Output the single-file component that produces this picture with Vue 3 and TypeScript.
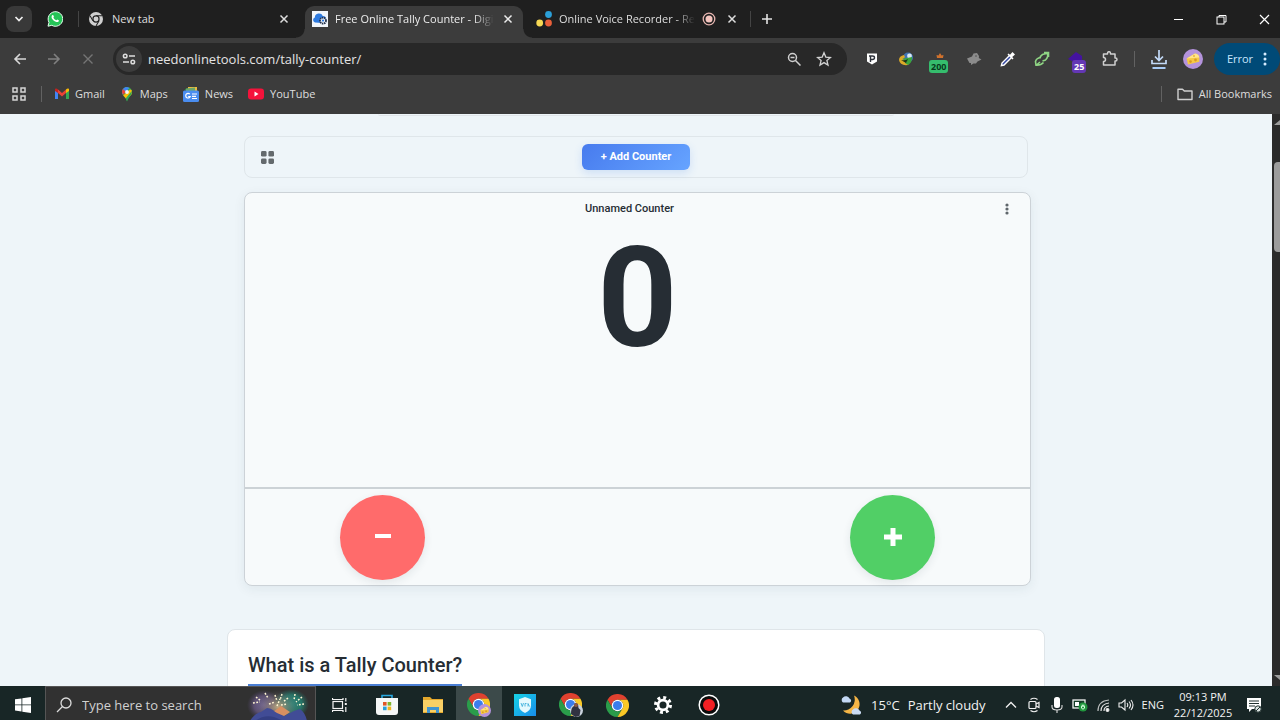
<script setup lang="ts">
import { ref } from 'vue'

const address = ref('needonlinetools.com/tally-counter/')
const search = ref('')
const count = ref(0)
</script>

<template>
  <svg class="defs" aria-hidden="true">
    <symbol id="chrome" viewBox="0 0 48 48">
      <path fill="#e0412f" d="M24 12H44.8A24 24 0 0 0 3.2 12L13.6 30A12 12 0 0 1 24 12Z" />
      <path fill="#2a9d4a" d="M13.6 30L3.2 12A24 24 0 0 0 24 48L34.4 30A12 12 0 0 1 13.6 30Z" />
      <path fill="#fbc926" d="M34.4 30L24 48A24 24 0 0 0 44.8 12H24A12 12 0 0 1 34.4 30Z" />
      <circle cx="24" cy="24" r="12" fill="#fff" />
      <circle cx="24" cy="24" r="9.5" fill="#3b7ded" />
    </symbol>
    <symbol id="cross" viewBox="0 0 16 16">
      <path d="M4 4l8 8M12 4l-8 8" fill="none" stroke="currentColor" stroke-width="1.7" />
    </symbol>
    <symbol id="cheese" viewBox="0 0 20 20">
      <circle cx="10" cy="10" r="10" fill="#b493dc" />
      <path d="M3.6 9.6L12 4.4c2.5.3 4 1.8 4.3 4.2v4.2L5 15.6z" fill="#f6c944" />
      <path d="M3.6 9.6L12 4.4c2.5.3 4 1.8 4.3 4.2z" fill="#ffe48a" />
      <circle cx="7.5" cy="12.6" r="1.3" fill="#d99a25" />
      <circle cx="12.5" cy="11" r="1.4" fill="#d99a25" />
      <circle cx="11" cy="7" r="1" fill="#e8b53a" />
    </symbol>
  </svg>

  <div class="desktop">
    <header class="tabs">
      <button class="tab-search" aria-label="Search tabs">
        <svg width="12" height="12" viewBox="0 0 12 12"><path d="M2.5 4l3.5 3.5L9.5 4" fill="none" stroke="#f0f0f0" stroke-width="1.7" /></svg>
      </button>
      <div class="tab pinned">
        <svg width="16" height="16" viewBox="0 0 16 16">
          <path d="M1 15.2l1-3.8A7.3 7.3 0 1 1 4.8 14.3z" fill="#25c457" stroke="#e8fff0" stroke-width="1" />
          <path d="M5.2 4.3c.5-.5 1-.4 1.2.1l.5 1.2c.1.4-.6.9-.5 1.2.6 1.2 1.5 2 2.7 2.5.4.1.9-.9 1.2-.8l1.4.7c.4.2.1 1.1-.3 1.5-1.9 1.5-7.5-2.3-6.8-5.2.1-.5.3-.9.6-1.2z" fill="#fff" />
        </svg>
      </div>
      <div class="tab first">
        <svg width="14" height="14" viewBox="0 0 48 48">
          <circle cx="24" cy="24" r="24" fill="#d0d0d0" />
          <path d="M24 12.5H45M13.5 30L3.5 12.5M34.5 30L24 48" stroke="#202020" stroke-width="3.5" />
          <circle cx="24" cy="24" r="12.5" fill="#202020" />
          <circle cx="24" cy="24" r="8.5" fill="#d0d0d0" />
        </svg>
        <span class="tab-title">New tab</span>
        <button class="close" aria-label="Close New tab"><svg width="14" height="14"><use href="#cross" /></svg></button>
      </div>
      <div class="tab active">
        <svg width="16" height="16" viewBox="0 0 16 16">
          <rect width="16" height="16" fill="#f2f6fb" />
          <path d="M3 11.5A2.7 2.7 0 0 1 2.8 6.4 4.2 4.2 0 0 1 10.8 5C13 5 14 6.3 14 7.8L10 12z" fill="#2e7be0" />
          <circle cx="11" cy="9.6" r="3" fill="#eaf1fa" stroke="#24324c" stroke-width="1.8" stroke-dasharray="1.5 .6" />
          <circle cx="11" cy="9.6" r="1.1" fill="#2e7be0" />
        </svg>
        <span class="tab-title faded">Free Online Tally Counter - Digital</span>
        <button class="close" aria-label="Close Tally Counter tab"><svg width="14" height="14"><use href="#cross" /></svg></button>
      </div>
      <div class="tab last">
        <svg width="16" height="16" viewBox="0 0 16 16">
          <circle cx="12.5" cy="3.5" r="3.4" fill="#2b9fd8" />
          <circle cx="3.7" cy="12" r="3.4" fill="#f7d954" />
          <circle cx="12.5" cy="12" r="3.4" fill="#e9603a" />
        </svg>
        <span class="tab-title faded">Online Voice Recorder - Record</span>
        <svg width="14" height="14" viewBox="0 0 14 14">
          <circle cx="7" cy="7" r="5.8" fill="none" stroke="#e6b5b0" stroke-width="1.3" />
          <circle cx="7" cy="7" r="3.5" fill="#f4c4be" />
        </svg>
        <button class="close" aria-label="Close Voice Recorder tab"><svg width="14" height="14"><use href="#cross" /></svg></button>
      </div>
      <button class="new-tab" aria-label="New tab">
        <svg width="12" height="12" viewBox="0 0 12 12"><path d="M6 1v10M1 6h10" stroke="#e3e3e3" stroke-width="1.6" /></svg>
      </button>
      <div class="window-buttons">
        <button aria-label="Minimise"><svg width="11" height="11" viewBox="0 0 11 11"><path d="M1 5.5h9" stroke="#fff" /></svg></button>
        <button aria-label="Restore"><svg width="11" height="11" viewBox="0 0 11 11" fill="none" stroke="#fff"><rect x="1" y="3" width="7" height="7" /><path d="M3 3V1.5h7V8H8" /></svg></button>
        <button aria-label="Close window"><svg width="11" height="11" viewBox="0 0 11 11"><path d="M1 1l9 9M10 1l-9 9" stroke="#fff" stroke-width="1.2" /></svg></button>
      </div>
    </header>

    <nav class="toolbar" aria-label="Browser toolbar">
      <div class="nav-buttons">
        <button class="tool" aria-label="Back"><svg width="14" height="14" viewBox="0 0 14 14"><path d="M13 7H2M7 2L2 7l5 5" fill="none" stroke="#d8d8d8" stroke-width="1.6" /></svg></button>
        <button class="tool" aria-label="Forward"><svg width="14" height="14" viewBox="0 0 14 14"><path d="M1 7h11M7 2l5 5-5 5" fill="none" stroke="#808080" stroke-width="1.6" /></svg></button>
        <button class="tool" aria-label="Stop"><svg width="14" height="14" viewBox="0 0 14 14"><path d="M2.5 2.5l9 9M11.5 2.5l-9 9" stroke="#757575" stroke-width="1.4" /></svg></button>
      </div>
      <div class="omnibox">
        <button class="site-info" aria-label="Site information">
          <svg width="14" height="14" viewBox="0 0 14 14" fill="none" stroke="#dedede" stroke-width="1.5"><circle cx="3.2" cy="4" r="1.8" /><path d="M7 4h6M1 10h6" /><circle cx="10.8" cy="10" r="1.8" /></svg>
        </button>
        <input v-model="address" class="address" type="text" aria-label="Address" />
        <button class="omni-button" aria-label="Zoom"><svg width="14" height="14" viewBox="0 0 14 14" fill="none" stroke="#cfcfcf" stroke-width="1.5"><circle cx="5.5" cy="5.5" r="4" /><path d="M8.5 8.5l5 5M3.5 5.5h4" /></svg></button>
        <button class="omni-button" aria-label="Bookmark this page"><svg width="16" height="16" viewBox="0 0 16 16"><path d="M8 1.8l1.8 4.3 4.7.4-3.6 3 1.1 4.6L8 11.6l-4 2.5 1.1-4.6-3.6-3 4.7-.4z" fill="none" stroke="#d2d2d2" stroke-width="1.3" /></svg></button>
      </div>
      <div class="extensions">
        <button class="tool" aria-label="Privacy extension">
          <svg width="12" height="14" viewBox="0 0 12 14"><path d="M1 1.5h10V9.5L6 12.5 1 9.5z" fill="#fff" /><path d="M4.5 10V3.5M3 4h3.5q2 0 2 1.7t-2 1.8H4.5" fill="none" stroke="#30343c" stroke-width="1.4" /></svg>
        </button>
        <button class="tool" aria-label="Download manager">
          <svg width="16" height="14" viewBox="0 0 16 14"><circle cx="10" cy="5.5" r="5" fill="#3f73b4" /><circle cx="11.5" cy="4" r="2.4" fill="#d9e8f4" /><path d="M1 8q0-4 5-5l1 2-2 2 7 3-2 3q-8 1-9-5z" fill="#dba928" /><path d="M4 7l5-1 5-1q.5 5-4 8l-3-2 2-2z" fill="#3ba53d" /><path d="M3 8q4 1 7-1l-2 4z" fill="#14331a" /></svg>
        </button>
        <button class="tool" aria-label="Extension, 200">
          <svg width="12" height="14" viewBox="0 0 12 14"><path d="M6 1l1.5 2.5 2-.5L9 6H3l-.5-3 2 .5z" fill="#d0712d" /></svg>
          <span class="badge green">200</span>
        </button>
        <button class="tool" aria-label="Bird extension">
          <svg width="16" height="14" viewBox="0 0 16 14"><path d="M1 6.5L6 4.5 7.5 1.5 11 1l2 3-.2 2L15.5 7.5 11.5 9.5 10 11.5H7.5L5 13V11H3.5z" fill="#8b8b8b" /><circle cx="10" cy="4" r=".8" fill="#4b4b4b" /></svg>
        </button>
        <button class="tool" aria-label="Colour picker">
          <svg width="16" height="16" viewBox="0 0 16 16"><path d="M9.5 4.5L2 12l-.6 2.6L4 14l7.5-7.5" fill="#3548a0" stroke="#fff" stroke-width="1.4" /><path d="M7.5 3.5l5 5 1-1-1.3-1.4L15 3.5 12.5 1 10 3.8 8.5 2.5z" fill="#fff" /></svg>
        </button>
        <button class="tool" aria-label="Link extension">
          <svg width="16" height="16" viewBox="0 0 16 16" fill="none" stroke="#8fd584" stroke-width="1.6"><path d="M6 7.5Q6 5 8.5 3.500L14 2M10 1.500h4.500V6M14 2.500Q14 7 11.500 9L8.500 10M6.500 6.500Q2.500 7 1.500 10.500L2 14.200Q7 14.500 9.500 11.500M6 11l-3.500 3" /></svg>
        </button>
        <button class="tool" aria-label="Extension, 25">
          <svg width="16" height="14" viewBox="0 0 16 14"><path d="M8 0l6 4v5H4L0 7z" fill="#4413a0" /></svg>
          <span class="badge violet">25</span>
        </button>
        <button class="tool" aria-label="Extensions">
          <svg width="16" height="16" viewBox="0 0 16 16"><path d="M1.5 3h4V2.2a1.5 1.5 0 0 1 3 0V3H13v4h.5a1.5 1.5 0 0 1 0 3H13v4H1.5v-3.5a2 2 0 0 0 0-4z" fill="none" stroke="#d0d0d0" stroke-width="1.5" stroke-linejoin="round" /></svg>
        </button>
      </div>
      <span class="rule"></span>
      <button class="tool" aria-label="Downloads">
        <svg width="16" height="20" viewBox="0 0 16 20"><path d="M8 1v10M4 7.5l4 4 4-4M1 11v3.5h14V11" fill="none" stroke="#c3daf8" stroke-width="1.7" /><path d="M1.5 19h13" stroke="#a8cbf6" stroke-width="2" /></svg>
      </button>
      <button class="tool" aria-label="Profile"><svg width="20" height="20"><use href="#cheese" /></svg></button>
      <button class="error">Error<svg width="4" height="14" viewBox="0 0 4 14" fill="#d6ecff"><circle cx="2" cy="2" r="1.5" /><circle cx="2" cy="7" r="1.5" /><circle cx="2" cy="12" r="1.5" /></svg></button>
    </nav>

    <nav class="bookmarks" aria-label="Bookmarks">
      <button class="apps" aria-label="Apps"><svg width="14" height="14" viewBox="0 0 14 14" fill="none" stroke="#d5d5d5" stroke-width="1.5"><rect x="1" y="1" width="4" height="4" /><rect x="9" y="1" width="4" height="4" /><rect x="1" y="9" width="4" height="4" /><rect x="9" y="9" width="4" height="4" /></svg></button>
      <span class="rule"></span>
      <a href="#">
        <svg width="14" height="12" viewBox="0 0 14 12"><path d="M0 1.5L3 4v7H0z" fill="#4285f4" /><path d="M11 4l3-2.5V11h-3z" fill="#34a853" /><path d="M3 4V1.5L7 5l4-3.5V5L7 8.5 3 5z" fill="#ea4335" /><path d="M0 1.5C0 .5 1.5 0 3 1.5V5L0 3z" fill="#c5221f" /><path d="M14 1.5C14 .5 12.5 0 11 1.5V5l3-2z" fill="#fbbc04" /></svg>
        Gmail
      </a>
      <a href="#">
        <svg width="14" height="16" viewBox="0 0 14 16"><path d="M7 1a5 5 0 0 1 5 5c0 4-4 5-5 9.5C6 11 2 10 2 6a5 5 0 0 1 5-5z" fill="#34a853" /><path d="M7 1a5 5 0 0 0-5 5l.5 2.5L9.5 2z" fill="#4285f4" /><path d="M3 2.9A5 5 0 0 0 2 6l1 3 3-3z" fill="#ea4335" /><path d="M3.2 9.6L10 3.5l1.5.5c1 2 .4 4-.5 5L6 12.5z" fill="#fbbc04" /><path d="M11.8 5c.8 4-4 6-4.8 10.5l-1-3.5z" fill="#34a853" /><circle cx="7" cy="6" r="1.9" fill="#f5f5f5" /></svg>
        Maps
      </a>
      <a href="#">
        <svg width="16" height="16" viewBox="0 0 16 16"><path d="M2 3l10-2 1 4H3z" fill="#2ba24c" /><path d="M5 1h9v6H5z" fill="#eabc3d" /><path d="M3 2.5l9-1v4H3z" fill="#6ba66b" /><rect y="4.5" width="16" height="11.5" rx="1.5" fill="#4a8df0" /><path d="M6.8 8.2A2.3 2.3 0 1 0 7.2 10.5H5.2M9 8h5M9 10.3h4M9 12.5h5" fill="none" stroke="#fff" stroke-width="1.2" /></svg>
        News
      </a>
      <a href="#">
        <svg width="16" height="12" viewBox="0 0 16 12"><rect y=".5" width="16" height="11" rx="3" fill="#f5133b" /><path d="M6.5 3.5v5l4-2.5z" fill="#fff" /></svg>
        YouTube
      </a>
      <span class="rule end"></span>
      <button class="all-bookmarks">
        <svg width="16" height="14" viewBox="0 0 16 14"><path d="M1 2.2h4.5l1.8 1.8H15v8.5H1z" fill="none" stroke="#cfcfcf" stroke-width="1.4" stroke-linejoin="round" /></svg>
        All Bookmarks
      </button>
    </nav>

    <div class="viewport">
      <main class="page">
        <div class="intro"></div>
        <section class="counter-bar">
          <button class="layout" aria-label="Change layout"><svg width="13" height="13" viewBox="0 0 14 14" fill="#646a6d"><rect width="6" height="6" rx="1.5" /><rect x="8" width="6" height="6" rx="1.5" /><rect y="8" width="6" height="6" rx="1.5" /><rect x="8" y="8" width="6" height="6" rx="1.5" /></svg></button>
          <button class="add">+ Add Counter</button>
        </section>
        <section class="card">
          <div class="card-head">
            <h3>Unnamed Counter</h3>
            <button class="card-menu" aria-label="Counter menu"><svg width="4" height="12" viewBox="0 0 4 12" fill="#5f666b"><circle cx="2" cy="2" r="1.6" /><circle cx="2" cy="6" r="1.6" /><circle cx="2" cy="10" r="1.6" /></svg></button>
          </div>
          <output class="value">{{ count }}</output>
          <div class="controls">
            <button class="round minus" aria-label="Decrease" @click="count--"><svg width="18" height="18" viewBox="0 0 18 18"><path d="M1 8h16" stroke="#fff" stroke-width="4" /></svg></button>
            <button class="round plus" aria-label="Increase" @click="count++"><svg width="18" height="18" viewBox="0 0 18 18"><path d="M0 9h18M9 0v18" stroke="#fff" stroke-width="5" /></svg></button>
          </div>
        </section>
        <article class="about">
          <h2>What is a Tally Counter?</h2>
        </article>
      </main>
      <div class="scrollbar"><span class="arrow up"></span><span class="thumb"></span><span class="arrow down"></span></div>
    </div>

    <footer class="taskbar">
      <button class="start" aria-label="Start"><svg width="16" height="16" viewBox="0 0 16 16" fill="#fff"><path d="M0 2.3l6.5-.9v6.1H0zM7.3 1.3L16 0v7.5H7.3zM0 8.3h6.5v6.2L0 13.6zM7.3 8.3H16V16l-8.7-1.3z" /></svg></button>
      <label class="search">
        <svg width="16" height="16" viewBox="0 0 16 16" fill="none" stroke="#dcdcdc" stroke-width="1.3"><circle cx="10" cy="6" r="5" /><path d="M6.5 9.5L1 15" /></svg>
        <input v-model="search" type="text" placeholder="Type here to search" aria-label="Search Windows" />
        <svg width="62" height="32" viewBox="0 0 62 32">
          <defs>
            <radialGradient id="glowA"><stop offset="0" stop-color="#c0a983" /><stop offset="1" stop-color="#545460" stop-opacity="0" /></radialGradient>
            <radialGradient id="glowB"><stop offset="0" stop-color="#259080" /><stop offset=".6" stop-color="#267466" /><stop offset="1" stop-color="#28665c" stop-opacity="0" /></radialGradient>
            <radialGradient id="glowC"><stop offset="0" stop-color="#75679a" /><stop offset=".6" stop-color="#5b4f70" /><stop offset="1" stop-color="#49405d" stop-opacity="0" /></radialGradient>
          </defs>
          <ellipse cx="17" cy="16" rx="17" ry="15" fill="url(#glowC)" />
          <ellipse cx="44" cy="15" rx="18" ry="15" fill="url(#glowB)" />
          <ellipse cx="31" cy="18" rx="22" ry="17" fill="url(#glowA)" />
          <path d="M26 23l8-6 9 6-7 5z" fill="#d88f61" />
          <path d="M3 32c2-4 6-8 11-9l6-4c4 0 7 3 10 5l7 3 10-5 6-2c4 3 6 7 7 12z" fill="#414c96" />
          <path d="M8 32c5-4 12-6 19-4l10 4z" fill="#343f83" />
          <path d="M6 14l7-1M9 8l5 4M18 4l3 5M28 6l2 6M35 5l-2 6M41 9l-5 4M48 5l-1 6M55 8l-6 5M57 15l-7 1M22 15l6-2M34 16l6-1M30 17l3-7" stroke="#fff6d3" stroke-width="1.5" stroke-dasharray="1.8 1.5" />
        </svg>
      </label>
      <div class="apps-row">
        <button class="app wide" aria-label="Task view"><svg width="16" height="16" viewBox="0 0 16 16" fill="none" stroke="#f4f4f4" stroke-width="1.2"><rect x="1" y="4.5" width="9.5" height="7" /><path d="M.5 1v1.5H11V1M.5 15v-1.5H11V15M13.8 1v3.5M13.8 10v5" /><path d="M12.8 7h2" stroke-width="2" /></svg></button>
        <button class="app" aria-label="Store"><svg width="22" height="24" viewBox="0 0 22 24"><path d="M6 6V2.5h10V6" fill="none" stroke="#28a8e0" stroke-width="1.6" /><path d="M0 5h22v14q0 3-3 3H3q-3 0-3-3z" fill="#f5f7f7" /><path d="M7 9h3.6v3.6H7z" fill="#e05526" /><path d="M11.6 9h3.6v3.6h-3.6z" fill="#7eb52d" /><path d="M7 13.6h3.6v3.6H7z" fill="#279fd9" /><path d="M11.6 13.6h3.6v3.6h-3.6z" fill="#f1b61f" /></svg></button>
        <button class="app" aria-label="File explorer"><svg width="20" height="18" viewBox="0 0 20 18"><path d="M0 1h7l2 2h11v14H0z" fill="#e4a82c" /><path d="M0 4h20v12H0z" fill="#f9d065" /><path d="M4 17v-6h12v6h-3v-3H7v3z" fill="#4195d1" /></svg></button>
        <button class="app current" aria-label="Chrome"><svg width="24" height="24" viewBox="0 0 24 24"><use href="#chrome" width="23" height="23" /><use href="#cheese" x="11" y="11" width="13" height="13" /></svg></button>
        <button class="app" aria-label="VPN"><svg width="22" height="22" viewBox="0 0 22 22"><defs><linearGradient id="vpn" x2="1" y2="1"><stop stop-color="#17d3e6" /><stop offset="1" stop-color="#188deb" /></linearGradient></defs><rect width="22" height="22" fill="url(#vpn)" /><path d="M11 3l6 2.3v6Q17 16.5 11 19 5 16.5 5 11.3v-6z" fill="#e4f9fd" /><path d="M7 9l1.3 3.5L9.5 9M11 12.5V9.5h1.5M14 12.5v-3l1.5 3" fill="none" stroke="#2ba8d8" stroke-width=".8" /></svg></button>
        <button class="app" aria-label="Chrome, second profile"><svg width="24" height="24" viewBox="0 0 24 24"><use href="#chrome" width="23" height="23" /><circle cx="17.5" cy="17.5" r="6.5" fill="#c9d2dc" /><path d="M12 21q0-7 3-8l1-3 3 1 .5 4 2 2-1 6-4 1z" fill="#313241" /><circle cx="17" cy="12" r="2" fill="#8c5845" /></svg></button>
        <button class="app" aria-label="Chrome, main profile"><svg width="23" height="23"><use href="#chrome" /></svg></button>
        <button class="app" aria-label="Settings"><svg width="18" height="18" viewBox="0 0 18 18"><circle cx="9" cy="9" r="7.5" fill="none" stroke="#fff" stroke-width="3" stroke-dasharray="2.95 2.94" /><circle cx="9" cy="9" r="4.9" fill="none" stroke="#fff" stroke-width="2.7" /></svg></button>
        <button class="app" aria-label="Recorder"><svg width="22" height="22" viewBox="0 0 22 22"><circle cx="11" cy="11" r="9.8" fill="#0b0b0b" stroke="#fff" stroke-width="1.5" /><circle cx="11" cy="11" r="6" fill="#f32024" /></svg></button>
      </div>
      <button class="weather">
        <svg width="24" height="22" viewBox="0 0 24 22"><path d="M15 1.5a9.5 9.5 0 1 1-11 15A11 11 0 0 0 15 1.5z" fill="#f5b546" /><path d="M4 8.5a3 3 0 0 1 0-5 4 4 0 0 1 6.5 1 2.2 2.2 0 0 1 .5 4z" fill="#c3d8f4" /><path d="M14 20.5a2.9 2.9 0 0 1 0-5 4 4 0 0 1 6.5 1 2.2 2.2 0 0 1 .5 4z" fill="#cadbf3" /></svg>
        <span>15°C</span><span>Partly cloudy</span>
      </button>
      <div class="tray">
        <button aria-label="Show hidden icons"><svg width="12" height="8" viewBox="0 0 12 8"><path d="M1 6.5l5-5 5 5" fill="none" stroke="#f0f0f0" stroke-width="1.3" /></svg></button>
        <button aria-label="Camera"><svg width="12" height="16" viewBox="0 0 12 16" fill="none" stroke="#f0f0f0" stroke-width="1.2"><rect x="1" y="4.5" width="7" height="7" rx="1" /><path d="M8 7l3-1.5v5L8 9M2.5 2.5q3.5-2.5 7 0M2.5 13.5q3.5 2.5 7 0" /></svg></button>
        <button aria-label="Microphone"><svg width="12" height="16" viewBox="0 0 12 16"><rect x="3" y="0" width="6" height="11" rx="2.5" fill="#fff" /><path d="M1 8v2q0 3 5 3t5-3V8M6 13v3" fill="none" stroke="#ddd" stroke-width="1.1" /></svg></button>
        <button aria-label="Battery"><svg width="16" height="14" viewBox="0 0 16 14"><rect x="1" y="2" width="12" height="8" fill="#143c26" stroke="#f2f2f2" stroke-width="1.3" /><path d="M3 4h4v4H3z" fill="#fff" /><circle cx="11" cy="9" r="4.5" fill="#20963d" /><path d="M9.5 8.2h3v2q-1.5 2-3 0zM10.3 8V6.6M11.8 8V6.6" fill="none" stroke="#d9ffe0" /></svg></button>
        <button aria-label="Network"><svg width="14" height="14" viewBox="0 0 14 14" fill="none" stroke="#e4e4e4" stroke-width="1.2"><path d="M2 13Q2 3 13 2" opacity=".8" /><path d="M5 13q0-7 8-8M8 13q0-4.5 5-5" /><circle cx="11.5" cy="12" r="1.4" fill="#fff" /></svg></button>
        <button aria-label="Volume"><svg width="16" height="14" viewBox="0 0 16 14" fill="none" stroke="#ededed" stroke-width="1.1"><path d="M1 5h2.5L7 2v10L3.5 9H1zM9 5q1.5 2 0 4M11 3.5q3 3.5 0 7M13 2q4 5 0 10" /></svg></button>
      </div>
      <button class="language">ENG</button>
      <button class="clock"><span>09:13 PM</span><span>22/12/2025</span></button>
      <button class="notice" aria-label="Notifications"><svg width="17" height="17" viewBox="0 0 17 17"><path d="M1 1h14v11H6l-3 3v-3H1z" fill="#fff" /><path d="M3 4h10M3 6.5h10M3 9h6" stroke="#21312f" stroke-width="1.1" /><circle cx="12" cy="12" r="3.2" fill="#dce4e2" stroke="#21312f" /><path d="M10 14l4-4" stroke="#21312f" /></svg></button>
    </footer>
  </div>
</template>

<style>
body {
  margin: 0;
}
</style>

<style scoped>
* {
  box-sizing: border-box;
}
button,
input {
  margin: 0;
  padding: 0;
  border: 0;
  background: none;
  color: inherit;
  font: inherit;
}
button {
  display: flex;
  align-items: center;
  justify-content: center;
}
svg {
  flex: none;
  display: block;
}
.defs {
  position: absolute;
  width: 0;
  height: 0;
}
.desktop {
  display: flex;
  flex-direction: column;
  height: 100vh;
  overflow: hidden;
  background: #3c3c3c;
  color: #dedede;
  font: 11px/16px "Open Sans", "Noto Sans", sans-serif;
  white-space: nowrap;
}

.tabs {
  display: flex;
  align-items: center;
  height: 38px;
  flex: none;
  padding-left: 6px;
  background: #1f1f1f;
}
.tab-search {
  width: 26px;
  height: 26px;
  border-radius: 8px;
  background: #393939;
}
.tab {
  display: flex;
  align-items: center;
  height: 32px;
}
.pinned {
  width: 47px;
  height: 16px;
  justify-content: center;
  border-right: 1px solid #444;
}
.first {
  width: 226px;
  padding: 0 14px 0 10px;
  gap: 9px;
}
.active {
  position: relative;
  align-self: flex-end;
  width: 218px;
  padding: 0 8px 6px 7px;
  gap: 7px;
  border-radius: 9px 9px 0 0;
  background: #3c3c3c;
  color: #ececec;
}
.active::before,
.active::after {
  content: "";
  position: absolute;
  bottom: 0;
  width: 9px;
  height: 9px;
}
.active::before {
  right: 100%;
  background: radial-gradient(circle at 0 0, #1f1f1f 8px, #3c3c3c 9px);
}
.active::after {
  left: 100%;
  background: radial-gradient(circle at 100% 0, #1f1f1f 8px, #3c3c3c 9px);
}
.last {
  width: 227px;
  padding: 0 11px 0 13px;
  gap: 7px;
}
.last .close {
  margin-left: 2px;
}
.tab-title {
  flex: 1;
  min-width: 0;
  overflow: hidden;
}
.faded {
  mask-image: linear-gradient(to left, transparent, #000 20px);
}
.close {
  width: 14px;
  height: 14px;
}
.new-tab {
  width: 32px;
  height: 16px;
  border-left: 1px solid #444;
}
.window-buttons {
  display: flex;
  gap: 11px;
  margin-left: auto;
}
.window-buttons button {
  width: 32px;
  height: 38px;
}

.toolbar {
  display: flex;
  align-items: center;
  height: 42px;
  flex: none;
  padding-left: 3px;
  background: #3c3c3c;
}
.nav-buttons,
.extensions {
  display: flex;
}
.tool {
  position: relative;
  width: 34px;
  height: 34px;
}
.omnibox {
  display: flex;
  align-items: center;
  flex: 1;
  height: 32px;
  margin: 0 8px;
  padding: 0 8px 0 3px;
  border-radius: 16px;
  background: #282828;
}
.site-info {
  width: 26px;
  height: 26px;
  border-radius: 13px;
  background: #3c3c3c;
}
.address {
  flex: 1;
  min-width: 0;
  padding-left: 6px;
  color: #e3e3e3;
  font-size: 13px;
}
.omni-button {
  width: 30px;
  height: 30px;
}
.badge {
  position: absolute;
  border-radius: 3px;
  padding: 0 2px;
  font: bold 9px/13px "Open Sans", sans-serif;
}
.green {
  left: 6px;
  top: 18px;
  background: #35bd6d;
  color: #073b1d;
}
.violet {
  left: 13px;
  top: 18px;
  background: #6337b4;
  color: #fff;
}
.rule {
  width: 1px;
  height: 16px;
  margin: 0 7px;
  background: #626262;
}
.error {
  width: 66px;
  height: 32px;
  margin-left: 4px;
  gap: 10px;
  border-radius: 16px;
  background: #004a77;
  color: #c9e7ff;
}

.bookmarks {
  display: flex;
  align-items: center;
  flex: none;
  height: 34px;
  padding: 0 8px 6px 3px;
  background: #3c3c3c;
}
.apps {
  width: 31px;
  height: 24px;
}
.bookmarks .rule {
  margin: 0 13px 0 7px;
}
.bookmarks .end {
  margin: 0 15px 0 auto;
}
.bookmarks a {
  display: flex;
  align-items: center;
  gap: 6px;
  margin-right: 15px;
  color: #dedede;
  text-decoration: none;
}
.all-bookmarks {
  gap: 6px;
}

.viewport {
  display: flex;
  flex: 1;
  min-height: 0;
}
.page {
  display: flex;
  flex-direction: column;
  flex: 1;
  min-width: 0;
  overflow: hidden;
  background: #eef5f9;
  color: #262d34;
  font-family: Roboto, sans-serif;
}
.intro {
  width: 516px;
  max-width: 100%;
  height: 2px;
  flex: none;
  align-self: center;
  margin-bottom: 20px;
  border-bottom: 1px solid #e0e5e9;
  border-radius: 0 0 8px 8px;
}
.counter-bar {
  display: grid;
  grid-template-columns: 1fr auto 1fr;
  align-items: center;
  flex: none;
  width: 784px;
  max-width: 100%;
  height: 42px;
  margin: 0 auto 14px;
  padding: 0 16px;
  border: 1px solid #dfe6ea;
  border-radius: 8px;
}
.layout {
  justify-self: start;
}
.add {
  width: 108px;
  height: 26px;
  border-radius: 6px;
  background: linear-gradient(135deg, #477bee, #66a4ff);
  box-shadow: 0 3px 8px #3f7dec30;
  color: #fff;
  font: bold 11px/16px Roboto, sans-serif;
}
.card {
  display: flex;
  flex-direction: column;
  flex: none;
  width: 787px;
  max-width: 100%;
  align-self: center;
  margin: 0 0 43px 3px;
  border: 1px solid #ccd2d7;
  border-radius: 8px;
  background: #f7fafb;
  box-shadow: 0 3px 12px #1e324612;
}
.card-head {
  display: flex;
  align-items: center;
  height: 32px;
  padding: 0 15px;
}
.card-head h3 {
  flex: 1;
  margin: 0;
  font: 500 11px/16px Roboto, sans-serif;
  text-align: center;
}
.card-menu {
  width: 16px;
  height: 24px;
}
.value {
  padding-bottom: 116px;
  font: bold 140px/146px Roboto, sans-serif;
  text-align: center;
}
.controls {
  display: flex;
  align-items: center;
  justify-content: space-between;
  height: 98px;
  padding: 0 95px;
  border-top: 2px solid #ccd2d6;
}
.round {
  width: 85px;
  height: 85px;
  border-radius: 50%;
  box-shadow: 0 3px 8px #23324518;
}
.minus {
  background: #ff6b6b;
}
.plus {
  background: #51cf66;
}
.about {
  flex: none;
  width: 818px;
  max-width: 100%;
  align-self: center;
  padding: 20px 20px 40px;
  border: 1px solid #dfe5e9;
  border-radius: 8px;
  background: #fff;
}
.about h2 {
  display: inline-block;
  margin: 0;
  padding-bottom: 4px;
  border-bottom: 3px solid #4b7fd4;
  font: 500 20px/30px Roboto, sans-serif;
}
.scrollbar {
  display: flex;
  flex-direction: column;
  align-items: flex-end;
  width: 8px;
  padding: 6px 0;
  background: #2b2b2b;
}
.arrow {
  width: 6px;
  height: 5px;
  background: #9c9c9c;
}
.up {
  clip-path: polygon(100% 0, 100% 100%, 0 100%);
}
.down {
  margin-top: auto;
  clip-path: polygon(0 0, 100% 0, 100% 100%);
}
.thumb {
  width: 6px;
  height: 90px;
  margin-top: 37px;
  border-radius: 4px 0 0 4px;
  background: #9c9c9c;
}

.taskbar {
  display: flex;
  align-items: flex-start;
  flex: none;
  height: 34px;
  overflow: hidden;
  background: #182626;
  color: #f3f3f3;
}
.taskbar button,
.search {
  height: 38px;
}
.start {
  width: 45px;
}
.search {
  display: flex;
  align-items: center;
  width: 271px;
  padding: 0 6px 0 10px;
  border: 1px solid #555;
  background: #313131;
}
.search input {
  flex: 1;
  min-width: 0;
  padding-left: 10px;
  font-size: 13px;
}
.search input::placeholder {
  color: #d0d0d0;
  opacity: 1;
}
.apps-row {
  display: flex;
}
.app {
  width: 46px;
}
.wide {
  width: 48px;
}
.current {
  background: #3c4a4a;
}
.weather {
  gap: 8px;
  margin-left: auto;
  font-size: 13px;
}
.tray {
  display: flex;
  margin-left: 14px;
}
.tray button {
  width: 23px;
}
.language {
  margin-left: 4px;
}
.clock {
  flex-direction: column;
  width: 60px;
  margin-left: 9px;
}
.notice {
  margin: 0 17px 0 13px;
}
</style>
